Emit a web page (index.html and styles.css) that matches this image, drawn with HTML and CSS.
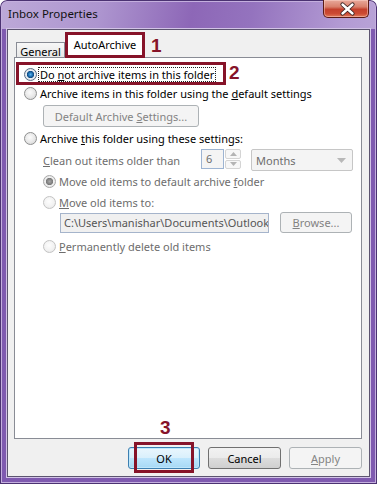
FILE: index.html
```html
<!DOCTYPE html>
<html>

<head>
    <title>Inbox Properties</title>
    <link rel="stylesheet" href="styles.css">
</head>

<body>
    <div class="window">
        <div class="titlebar">
            <span class="title">Inbox Properties</span>
            <div class="close-btn">
                <svg width="46" height="18" viewBox="0 0 46 18">
                    <path d="M19.5 5.5 L29.5 14.5 M29.5 5.5 L19.5 14.5" stroke="#3b2424" stroke-width="4.2" stroke-linecap="round" fill="none" />
                    <path d="M19.5 5.5 L29.5 14.5 M29.5 5.5 L19.5 14.5" stroke="#ffffff" stroke-width="2.4" stroke-linecap="round" fill="none" />
                </svg>
            </div>
        </div>

        <div class="client">
            <div class="tabs">
                <div class="tab">General</div>
                <div class="tab selected">AutoArchive</div>
                <span class="mark mark-1">1</span>
            </div>

            <div class="panel">
                <div class="first-row">
                    <div class="focus-box">
                        <span class="radio checked"></span>
                        <span class="label focused">Do <u>n</u>ot archive items in this folder</span>
                    </div>
                    <span class="mark mark-2">2</span>
                </div>

                <div class="row">
                    <span class="radio"></span>
                    <span class="label">Archive items in this folder using the <u>d</u>efault settings</span>
                </div>

                <button class="btn settings-btn" disabled>Default Archive <u>S</u>ettings...</button>

                <div class="row row-3">
                    <span class="radio"></span>
                    <span class="label">Archive <u>t</u>his folder using these settings:</span>
                </div>

                <div class="clean-row">
                    <span class="label dim clean-label"><u>C</u>lean out items older than</span>
                    <span class="spin-value">6</span>
                    <span class="spin-arrows">
                        <span class="spin-up"><svg width="7" height="4" viewBox="0 0 7 4"><path d="M0 4 L3.5 0 L7 4 Z" fill="#b4b4b4" /></svg></span>
                        <span class="spin-down"><svg width="7" height="4" viewBox="0 0 7 4"><path d="M0 0 L3.5 4 L7 0 Z" fill="#b4b4b4" /></svg></span>
                    </span>
                    <span class="dropdown">
                        <span>Months</span>
                        <svg width="9" height="5" viewBox="0 0 9 5"><path d="M0 0 L4.5 5 L9 0 Z" fill="#b8b8b8" /></svg>
                    </span>
                </div>

                <div class="row sub row-5">
                    <span class="radio disabled checked-dim"></span>
                    <span class="label dim">Move old items to default archive <u>f</u>older</span>
                </div>

                <div class="row sub row-6">
                    <span class="radio disabled"></span>
                    <span class="label dim"><u>M</u>ove old items to:</span>
                </div>

                <div class="path-row">
                    <span class="path-field">C:\Users\manishar\Documents\Outlook</span>
                    <button class="btn browse-btn" disabled><u>B</u>rowse...</button>
                </div>

                <div class="row sub row-8">
                    <span class="radio disabled"></span>
                    <span class="label dim"><u>P</u>ermanently delete old items</span>
                </div>

                <span class="mark mark-3">3</span>
            </div>

            <div class="buttons">
                <div class="ok-wrap">
                    <button class="btn dialog-btn default">OK</button>
                    <div class="mark-frame"></div>
                </div>
                <button class="btn dialog-btn">Cancel</button>
                <button class="btn dialog-btn" disabled><u>A</u>pply</button>
            </div>
        </div>
    </div>
</body>

</html>
```

FILE: styles.css
```css
body {
    margin: 0;
    width: 377px;
    height: 484px;
    overflow: hidden;
    font-family: "Noto Sans", "Segoe UI", sans-serif;
    font-size: 11px;
    color: #000;
}

.window {
    width: 377px;
    height: 484px;
    box-sizing: border-box;
    padding: 0 7px 7px 7px;
    display: flex;
    flex-direction: column;
    border-radius: 7px 7px 0 0;
    background:
        linear-gradient(to bottom, rgba(0, 0, 0, 0) 0, rgba(0, 0, 0, 0) 29px, #7f5ab0 29px),
        linear-gradient(100deg, #bda9d8 0%, #ad95cf 22%, #8d67b7 42%, #9473be 55%, #b39bd4 75%, #c4b4dd 100%);
    box-shadow: inset 0 0 0 1px #4b3272, inset 0 0 0 2px #c4afde;
}

/* title bar */

.titlebar {
    height: 29px;
    display: flex;
    justify-content: space-between;
    align-items: flex-start;
}

.title {
    margin: 6px 0 0 1px;
    font-size: 11.5px;
    color: #111;
}

.close-btn {
    width: 46px;
    height: 18px;
    margin-right: 1px;
    box-sizing: border-box;
    border: 1px solid #5a1b16;
    border-top: none;
    border-radius: 0 0 5px 5px;
    background: linear-gradient(to bottom, #e8a99b 0%, #d9806c 40%, #c4402c 55%, #cc4a33 80%, #e07a5a 100%);
    box-shadow: inset 0 0 0 1px rgba(255, 220, 210, 0.45);
    overflow: hidden;
}

.close-btn svg {
    display: block;
    margin: -1px 0 0 -1px;
}

/* client area */

.client {
    flex: 1;
    display: flex;
    flex-direction: column;
    background-color: #f0f0f0;
    border: 1px solid #5c5470;
    box-shadow: 0 0 0 1px #d2c3e6;
    padding: 2px 7px 0 6px;
}

.tabs {
    height: 26px;
    display: flex;
    align-items: flex-end;
    margin-bottom: -1px;
    padding-left: 2px;
}

.tab {
    width: 49px;
    height: 16px;
    box-sizing: border-box;
    padding-top: 1px;
    border: 1px solid #898c95;
    border-bottom: none;
    background: linear-gradient(to bottom, #f7f7f7, #e6e6e6);
    text-align: center;
    line-height: 15px;
}

.tab.selected {
    position: relative;
    z-index: 1;
    width: 80px;
    height: 26px;
    padding-top: 0;
    border: 3px solid #861329;
    background: #fff;
    line-height: 19px;
}

.mark {
    font-family: "Liberation Sans", Arial, sans-serif;
    font-weight: bold;
    font-size: 19px;
    line-height: 19px;
    color: #861329;
}

.mark-1 {
    align-self: flex-start;
    margin: 4px 0 0 6px;
}

/* tab panel */

.panel {
    height: 382px;
    box-sizing: border-box;
    display: flex;
    flex-direction: column;
    align-items: flex-start;
    padding-top: 4px;
    border: 1px solid #898c95;
    background-color: #fff;
}

.first-row {
    display: flex;
    align-items: flex-start;
    margin-left: 1px;
}

.focus-box {
    width: 210px;
    height: 23px;
    box-sizing: border-box;
    display: flex;
    align-items: center;
    padding: 1px 0 0 5px;
    border: 3px solid #861329;
}

.mark-2 {
    margin: 1px 0 0 3px;
}

.row {
    height: 16px;
    display: flex;
    align-items: center;
    padding-left: 9px;
}

.row.sub {
    padding-left: 28px;
}

.row-3 {
    margin-top: 3px;
}

.row-5 {
    margin-top: 2px;
}

.row-6 {
    margin-top: 5px;
}

.row-8 {
    margin-top: 5px;
}

.label {
    margin-left: 3px;
    white-space: nowrap;
}

.label.focused {
    margin-left: 2px;
    padding: 0 1px;
    line-height: 13px;
    outline: 1px dotted #222;
}

.dim {
    color: #6d6d6d;
}

/* radio buttons */

.radio {
    width: 11px;
    height: 11px;
    flex-shrink: 0;
    border: 1px solid #8e8f8f;
    border-radius: 50%;
    background: radial-gradient(circle at 45% 40%, #fbfbfb 0%, #e9e9e9 50%, #cfcfcf 100%);
}

.radio.checked {
    border-color: #5b6f86;
    background: radial-gradient(circle at 50% 50%, #5cb6f0 0, #2a7fc2 1.6px, #0f4b84 3.3px, #e9eef3 4px, #cfd4da 100%);
}

.radio.disabled {
    border-color: #c3c3c3;
    background: radial-gradient(circle at 45% 40%, #fdfdfd 0%, #f2f2f2 55%, #e2e2e2 100%);
}

.radio.checked-dim {
    border-color: #a9a9a9;
    background: radial-gradient(circle at 50% 50%, #a8a8a8 0, #8a8a8a 2px, #7a7a7a 3.3px, #f0f0f0 4px, #dcdcdc 100%);
}

/* buttons */

.btn {
    font-family: inherit;
    font-size: 11px;
    box-sizing: border-box;
    padding: 0;
    border: 1px solid #707070;
    border-radius: 3px;
    color: #000;
    background: linear-gradient(to bottom, #f2f2f2 0%, #ebebeb 50%, #dddddd 51%, #cfcfcf 100%);
}

.btn:disabled {
    border-color: #adb2b5;
    background: #f4f4f4;
    color: #838383;
}

.settings-btn {
    width: 156px;
    height: 22px;
    margin: 4px 0 0 28px;
}

.clean-row {
    height: 22px;
    display: flex;
    align-items: center;
    margin-top: 3px;
    padding-left: 28px;
}

.clean-label {
    width: 158px;
    margin-left: 0;
}

.spin-value {
    width: 23px;
    height: 20px;
    box-sizing: border-box;
    padding-left: 4px;
    border: 1px solid #9db4d2;
    background-color: #f4f4f4;
    color: #6d6d6d;
    line-height: 18px;
    margin-top: -2px;
}

.spin-arrows {
    width: 16px;
    height: 20px;
    display: flex;
    flex-direction: column;
    gap: 1px;
    margin: -2px 0 0 1px;
}

.spin-up,
.spin-down {
    flex: 1;
    display: flex;
    align-items: center;
    justify-content: center;
    border: 1px solid #d4d4d4;
    border-radius: 2px;
    background-color: #f7f7f7;
}

.dropdown {
    width: 102px;
    height: 22px;
    box-sizing: border-box;
    display: flex;
    align-items: center;
    justify-content: space-between;
    margin-left: 10px;
    padding: 0 6px 0 4px;
    border: 1px solid #c6c6c6;
    border-radius: 2px;
    background-color: #f4f4f4;
    color: #6d6d6d;
}

.path-row {
    display: flex;
    align-items: center;
    margin: 2px 0 0 45px;
}

.path-field {
    width: 209px;
    height: 20px;
    box-sizing: border-box;
    padding-left: 3px;
    border: 1px solid #a5b4cb;
    background-color: #f0f0f0;
    color: #555;
    line-height: 18px;
    white-space: nowrap;
    overflow: hidden;
}

.browse-btn {
    width: 72px;
    height: 21px;
    margin-left: 11px;
}

.mark-3 {
    margin: auto 0 1px 145px;
}

/* dialog buttons */

.buttons {
    display: flex;
    justify-content: flex-end;
    gap: 8px;
    margin-top: 8px;
}

.dialog-btn {
    width: 73px;
    height: 22px;
}

.dialog-btn.default {
    width: 72px;
    border-color: #3c7fb1;
    background: linear-gradient(to bottom, #eaf6fd 0%, #d9f0fc 50%, #bee6fd 51%, #a7d9f5 100%);
    box-shadow: inset 0 0 0 1px #bfe7fb;
}

.ok-wrap {
    position: relative;
}

.mark-frame {
    position: absolute;
    left: 6px;
    top: -5px;
    width: 60px;
    height: 31px;
    box-sizing: border-box;
    border: 3px solid #861329;
}
```
